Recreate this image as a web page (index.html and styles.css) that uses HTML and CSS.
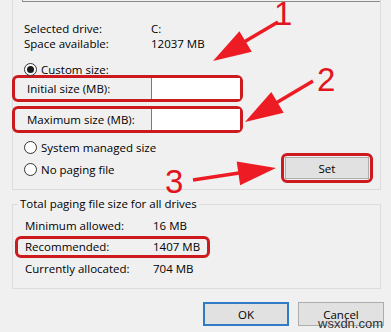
FILE: index.html
```html
<!doctype html>
<html>
<head>
	<meta charset="utf-8">
	<title>Virtual Memory</title>
	<link rel="stylesheet" href="styles.css">
</head>
<body>
	<div id="dialog">
		<div class="group" id="drive">
			<div class="listbox"></div>
			<div class="info">
				<div class="row"><span class="label">Selected drive:</span><span>C:</span></div>
				<div class="row"><span class="label">Space available:</span><span>12037 MB</span></div>
			</div>
			<div class="radio on" id="custom"><i></i>Custom size:</div>
			<div class="field mark"><span class="label">Initial size (MB):</span><span class="input"></span></div>
			<div class="field mark"><span class="label">Maximum size (MB):</span><span class="input"></span></div>
			<div class="lower">
				<div class="choices">
					<div class="radio"><i></i>System managed size</div>
					<div class="radio"><i></i>No paging file</div>
				</div>
				<div class="setbox mark"><button class="btn">Set</button></div>
			</div>
		</div>

		<fieldset id="total">
			<legend>Total paging file size for all drives</legend>
			<div class="row"><span class="label">Minimum allowed:</span><span>16 MB</span></div>
			<div class="row mark"><span class="label">Recommended:</span><span>1407 MB</span></div>
			<div class="row"><span class="label">Currently allocated:</span><span>704 MB</span></div>
		</fieldset>

		<div id="buttons">
			<button class="btn default">OK</button>
			<button class="btn">Cancel</button>
		</div>

		<!-- red annotations drawn over the dialog -->
		<svg class="notes" width="391" height="332" viewBox="0 0 391 332">
			<g class="arrow">
				<line x1="278" y1="22" x2="244" y2="42"></line>
				<polygon points="213,61 251.8,51.8 239.4,31.2"></polygon>
				<line x1="313" y1="81" x2="276" y2="103"></line>
				<polygon points="245,122 283.7,112.7 271.3,92.1"></polygon>
				<line x1="193" y1="180" x2="239" y2="173"></line>
				<polygon points="276,168 240.1,185.3 236.7,161.5"></polygon>
			</g>
			<text x="274" y="25">1</text>
			<text x="317" y="91">2</text>
			<text x="165" y="193">3</text>
		</svg>
		<span class="watermark">wsxdn.com</span>
	</div>
</body>
</html>
```

FILE: styles.css
```css
*{margin: 0; padding: 0; box-sizing: border-box;}
body{background: #f0f0f0; font: 11.5px "Open Sans", sans-serif; color: #000;}

#dialog {position: relative; width: 391px; height: 332px; overflow: hidden;}

.group {margin-left: 12px; width: 369px; border: 1px solid #dcdcdc; border-top: 0; padding-bottom: 6px;}
.listbox {margin-left: 9px; height: 2px; border-left: 1px solid #8c8c8c; border-bottom: 1px solid #8c8c8c;}

.info {margin-top: 19px;}
.info .row {display: flex; height: 15px; line-height: 15px; padding-left: 11px;}
.info .label {width: 127px;}

.radio {display: flex; align-items: center; gap: 4px; height: 15px; padding-left: 11px;}
.radio i {display: flex; align-items: center; justify-content: center; width: 13px; height: 13px; border: 1px solid #333; border-radius: 50%; background: #fff;}
.radio.on i::after {content: ""; width: 7px; height: 7px; border-radius: 50%; background: #1a1a1a;}
#custom {margin-top: 11px; height: 14px;}

.mark {border: 3px solid #cc1a1f; border-radius: 6px;}

.field {display: flex; margin: 4px 0 0 -1px; width: 231px; height: 27px;}
#custom + .field {margin-top: -1px;}
.field .label {width: 136px; padding-left: 12px; line-height: 21px;}
.input {flex: 1; background: #fff; border-left: 1px solid #7a7a7a;}

.lower {display: flex; margin-top: 7px;}
.choices {display: flex; flex-direction: column; gap: 7px;}
.setbox {display: flex; margin: 13px 7px 0 auto; width: 92px; height: 30px; padding: 1px;}
.setbox .btn {flex: 1;}

.btn {font: inherit; color: #000; background: #e1e1e1; border: 1px solid #adadad;}
.btn.default {border: 2px solid #2f7bc6;}

#total {margin: 7px 0 0 12px; width: 369px; border: 1px solid #dcdcdc; padding: 4px 0 9px;}
#total legend {margin-left: 5px; padding: 0 2px; line-height: 14px;}
#total .row {display: flex; height: 21px; line-height: 21px; padding-left: 12px;}
#total .label {width: 128px;}
#total .row.mark {margin-left: 2px; width: 195px; height: 22px; line-height: 16px; padding-left: 7px;}

#buttons {display: flex; justify-content: flex-end; gap: 9px; margin-top: 13px; padding-right: 7px;}
#buttons .btn {width: 86px; height: 24px;}

.notes {position: absolute; left: 0; top: 0; pointer-events: none;}
.notes line {stroke: #ed1c24; stroke-width: 3.5;}
.notes polygon {fill: #ed1c24;}
.notes text {fill: #e2141c; font: 33px "Liberation Sans", Arial, sans-serif;}

.watermark {position: absolute; left: 318px; top: 316px; font: 13px "Liberation Sans", Arial, sans-serif; color: #333;}
```
